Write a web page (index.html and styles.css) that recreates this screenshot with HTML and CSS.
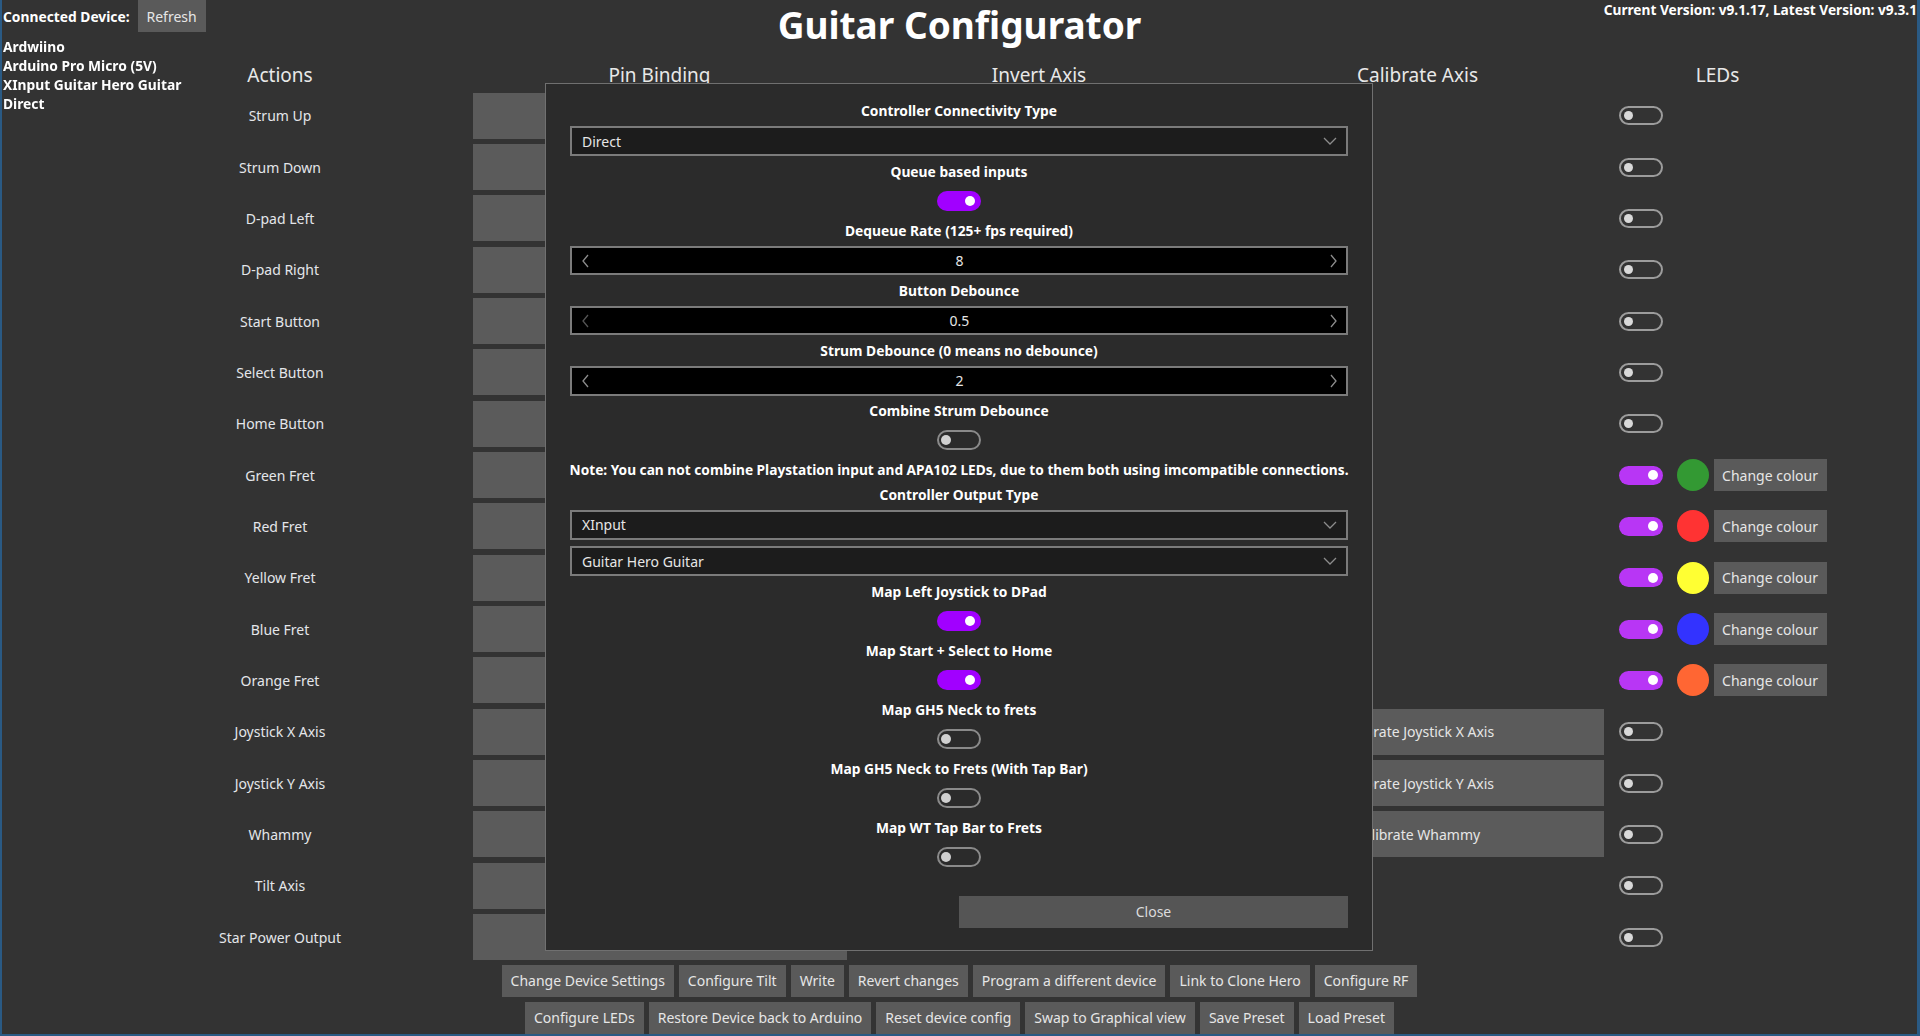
FILE: index.html
```html
<!DOCTYPE html>
<html lang="en">
<head>
<meta charset="utf-8">
<title>Guitar Configurator</title>
<link rel="stylesheet" href="styles.css">
</head>
<body>
<div class="app">
  <header class="topbar">
    <div class="device">
      <div class="device-head"><span class="strong">Connected Device:</span><button class="btn refresh">Refresh</button></div>
      <div class="device-info strong">Ardwiino<br>Arduino Pro Micro (5V)<br>XInput Guitar Hero Guitar<br>Direct</div>
    </div>
    <h1 class="title">Guitar Configurator</h1>
    <div class="version">Current Version: v9.1.17, Latest Version: v9.3.1</div>
  </header>

  <div class="table">
    <div class="th c1">Actions</div>
    <div class="th c2">Pin Binding</div>
    <div class="th c3">Invert Axis</div>
    <div class="th c4">Calibrate Axis</div>
    <div class="th c5">LEDs</div>

    <div class="label c1">Strum Up</div><div class="pin c2"></div>
    <div class="led c5"><span class="tog off"><span class="knob"></span></span></div>

    <div class="label c1">Strum Down</div><div class="pin c2"></div>
    <div class="led c5"><span class="tog off"><span class="knob"></span></span></div>

    <div class="label c1">D-pad Left</div><div class="pin c2"></div>
    <div class="led c5"><span class="tog off"><span class="knob"></span></span></div>

    <div class="label c1">D-pad Right</div><div class="pin c2"></div>
    <div class="led c5"><span class="tog off"><span class="knob"></span></span></div>

    <div class="label c1">Start Button</div><div class="pin c2"></div>
    <div class="led c5"><span class="tog off"><span class="knob"></span></span></div>

    <div class="label c1">Select Button</div><div class="pin c2"></div>
    <div class="led c5"><span class="tog off"><span class="knob"></span></span></div>

    <div class="label c1">Home Button</div><div class="pin c2"></div>
    <div class="led c5"><span class="tog off"><span class="knob"></span></span></div>

    <div class="label c1">Green Fret</div><div class="pin c2"></div>
    <div class="led c5"><span class="tog on"><span class="knob"></span></span><span class="dot green"></span><button class="btn colour">Change colour</button></div>

    <div class="label c1">Red Fret</div><div class="pin c2"></div>
    <div class="led c5"><span class="tog on"><span class="knob"></span></span><span class="dot red"></span><button class="btn colour">Change colour</button></div>

    <div class="label c1">Yellow Fret</div><div class="pin c2"></div>
    <div class="led c5"><span class="tog on"><span class="knob"></span></span><span class="dot yellow"></span><button class="btn colour">Change colour</button></div>

    <div class="label c1">Blue Fret</div><div class="pin c2"></div>
    <div class="led c5"><span class="tog on"><span class="knob"></span></span><span class="dot blue"></span><button class="btn colour">Change colour</button></div>

    <div class="label c1">Orange Fret</div><div class="pin c2"></div>
    <div class="led c5"><span class="tog on"><span class="knob"></span></span><span class="dot orange"></span><button class="btn colour">Change colour</button></div>

    <div class="label c1">Joystick X Axis</div><div class="pin c2"></div>
    <button class="calib c4">Calibrate Joystick X Axis</button>
    <div class="led c5"><span class="tog off"><span class="knob"></span></span></div>

    <div class="label c1">Joystick Y Axis</div><div class="pin c2"></div>
    <button class="calib c4">Calibrate Joystick Y Axis</button>
    <div class="led c5"><span class="tog off"><span class="knob"></span></span></div>

    <div class="label c1">Whammy</div><div class="pin c2"></div>
    <button class="calib c4">Calibrate Whammy</button>
    <div class="led c5"><span class="tog off"><span class="knob"></span></span></div>

    <div class="label c1">Tilt Axis</div><div class="pin c2"></div>
    <div class="led c5"><span class="tog off"><span class="knob"></span></span></div>

    <div class="label c1">Star Power Output</div><div class="pin c2"></div>
    <div class="led c5"><span class="tog off"><span class="knob"></span></span></div>
  </div>

  <div class="actions">
    <div class="btn-row">
      <button class="btn">Change Device Settings</button>
      <button class="btn">Configure Tilt</button>
      <button class="btn">Write</button>
      <button class="btn">Revert changes</button>
      <button class="btn">Program a different device</button>
      <button class="btn">Link to Clone Hero</button>
      <button class="btn">Configure RF</button>
    </div>
    <div class="btn-row">
      <button class="btn">Configure LEDs</button>
      <button class="btn">Restore Device back to Arduino</button>
      <button class="btn">Reset device config</button>
      <button class="btn">Swap to Graphical view</button>
      <button class="btn">Save Preset</button>
      <button class="btn">Load Preset</button>
    </div>
  </div>
</div>

<div class="modal">
  <div class="mlabel">Controller Connectivity Type</div>
  <div class="select"><span>Direct</span><svg class="chev" width="14" height="8" viewBox="0 0 14 8"><polyline points="1,1 7,7 13,1"/></svg></div>

  <div class="mlabel">Queue based inputs</div>
  <div class="mtog"><span class="mt on"><span class="knob"></span></span></div>

  <div class="mlabel">Dequeue Rate (125+ fps required)</div>
  <div class="spin"><svg class="arr" width="8" height="14" viewBox="0 0 8 14"><polyline points="6,1 1,7 6,13"/></svg><span>8</span><svg class="arr" width="8" height="14" viewBox="0 0 8 14"><polyline points="2,1 7,7 2,13"/></svg></div>

  <div class="mlabel">Button Debounce</div>
  <div class="spin"><svg class="arr dim" width="8" height="14" viewBox="0 0 8 14"><polyline points="6,1 1,7 6,13"/></svg><span>0.5</span><svg class="arr" width="8" height="14" viewBox="0 0 8 14"><polyline points="2,1 7,7 2,13"/></svg></div>

  <div class="mlabel">Strum Debounce (0 means no debounce)</div>
  <div class="spin"><svg class="arr" width="8" height="14" viewBox="0 0 8 14"><polyline points="6,1 1,7 6,13"/></svg><span>2</span><svg class="arr" width="8" height="14" viewBox="0 0 8 14"><polyline points="2,1 7,7 2,13"/></svg></div>

  <div class="mlabel">Combine Strum Debounce</div>
  <div class="mtog"><span class="mt off"><span class="knob"></span></span></div>

  <div class="mlabel note">Note: You can not combine Playstation input and APA102 LEDs, due to them both using imcompatible connections.</div>
  <div class="mlabel">Controller Output Type</div>
  <div class="select"><span>XInput</span><svg class="chev" width="14" height="8" viewBox="0 0 14 8"><polyline points="1,1 7,7 13,1"/></svg></div>
  <div class="select"><span>Guitar Hero Guitar</span><svg class="chev" width="14" height="8" viewBox="0 0 14 8"><polyline points="1,1 7,7 13,1"/></svg></div>

  <div class="mlabel">Map Left Joystick to DPad</div>
  <div class="mtog"><span class="mt on"><span class="knob"></span></span></div>

  <div class="mlabel">Map Start + Select to Home</div>
  <div class="mtog"><span class="mt on"><span class="knob"></span></span></div>

  <div class="mlabel">Map GH5 Neck to frets</div>
  <div class="mtog"><span class="mt off"><span class="knob"></span></span></div>

  <div class="mlabel">Map GH5 Neck to Frets (With Tap Bar)</div>
  <div class="mtog"><span class="mt off"><span class="knob"></span></span></div>

  <div class="mlabel">Map WT Tap Bar to Frets</div>
  <div class="mtog"><span class="mt off"><span class="knob"></span></span></div>

  <div class="mfooter"><button class="close">Close</button></div>
</div>
</body>
</html>
```

FILE: styles.css
```css
* { box-sizing: border-box; }

html, body {
  margin: 0;
  height: 100%;
}

body {
  background: #333333;
  font-family: "Noto Sans", "DejaVu Sans", sans-serif;
  font-size: 14px;
  color: #e4e6ea;
  overflow: hidden;
}

.app {
  height: 1036px;
  border-left: 2px solid #2a5a84;
  border-right: 3px solid #2a5a84;
  border-bottom: 2px solid #2a5a84;
  display: flex;
  flex-direction: column;
}

/* ---------- top bar ---------- */
.topbar {
  height: 60px;
  flex: none;
  display: grid;
  grid-template-columns: 1fr auto 1fr;
}

.device { padding-left: 1px; }

.device-head {
  display: flex;
  align-items: center;
  gap: 8px;
  height: 32px;
}

.strong {
  font-weight: 700;
  color: #ffffff;
  font-size: 13.8px;
}

.device-info {
  margin-top: 5px;
  line-height: 19px;
  position: relative;
  z-index: 1;
  white-space: nowrap;
}

.btn {
  background: #5a5a5a;
  color: #e6e6e6;
  border: 0;
  font-family: inherit;
  font-size: 14px;
  padding: 0 9px;
  height: 32px;
  white-space: nowrap;
}

.refresh { width: 68px; padding: 0; }

.title {
  margin: 0;
  font-size: 37px;
  font-weight: 700;
  line-height: 50px;
  color: #ffffff;
}

.version {
  justify-self: end;
  font-weight: 700;
  font-size: 13.7px;
  line-height: 20px;
  color: #ffffff;
  white-space: nowrap;
}

/* ---------- table ---------- */
.table {
  flex: none;
  display: grid;
  grid-template-columns: 385px 374px 385px 372px 228px;
  grid-template-rows: 30px;
  grid-auto-rows: 51.35px;
  justify-content: center;
  align-items: center;
}

.c1 { grid-column: 1; }
.c2 { grid-column: 2; }
.c3 { grid-column: 3; }
.c4 { grid-column: 4; }
.c5 { grid-column: 5; }

.th {
  text-align: center;
  font-size: 19px;
  line-height: 30px;
  color: #e8e8e8;
}

.label { text-align: center; }

.pin {
  height: 46px;
  background: #5b5b5b;
}

.calib {
  height: 46px;
  width: 100%;
  background: #5b5b5b;
  border: 0;
  color: #e6e6e6;
  font-family: inherit;
  font-size: 14px;
}

.led {
  display: flex;
  align-items: center;
  padding-left: 15px;
}

.tog {
  width: 44px;
  height: 19px;
  border-radius: 10px;
  display: flex;
  align-items: center;
  padding: 0 4px;
}

.tog .knob {
  width: 9px;
  height: 9px;
  border-radius: 50%;
}

.tog.off {
  border: 2px solid #9c9c9c;
  justify-content: flex-start;
  padding: 0 3px;
}

.tog.off .knob { background: #d9d9d9; }

.tog.on {
  background: #b836f5;
  justify-content: flex-end;
  padding: 0 5px;
}

.tog.on .knob { background: #ffffff; width: 10px; height: 10px; }

.dot {
  width: 32px;
  height: 32px;
  border-radius: 50%;
  margin-left: 14px;
  margin-right: 5px;
}

.green  { background: #339933; }
.red    { background: #ff3333; }
.yellow { background: #ffff33; }
.blue   { background: #3333ff; }
.orange { background: #ff6633; }

.colour { width: 113px; padding: 0; }

/* ---------- bottom buttons ---------- */
.actions {
  margin-top: 2px;
  display: flex;
  flex-direction: column;
  gap: 5px;
}

.btn-row {
  display: flex;
  justify-content: center;
  gap: 5px;
}

/* ---------- modal ---------- */
.modal {
  position: fixed;
  left: 545px;
  top: 83px;
  width: 828px;
  height: 868px;
  background: #2b2b2b;
  border: 1px solid #707070;
  padding: 17.2px 24px 0;
  display: flex;
  flex-direction: column;
  gap: 5.7px;
  text-align: center;
}

.mlabel {
  font-weight: 700;
  color: #ffffff;
  font-size: 13.8px;
  line-height: 19px;
  white-space: nowrap;
}

.mlabel.note {
  font-size: 13.7px;
  margin: 0 -10px;
}

.select {
  height: 30.5px;
  flex: none;
  border: 2px solid #7b7b7b;
  background: #1c1c1c;
  display: flex;
  align-items: center;
  justify-content: space-between;
  padding: 0 9px 0 10px;
  text-align: left;
  color: #e6e6e6;
}

.chev polyline, .arr polyline {
  fill: none;
  stroke: #8c8c8c;
  stroke-width: 1.3;
}

.arr.dim polyline { stroke: #555555; }

.spin {
  height: 29.7px;
  flex: none;
  border: 2px solid #7b7b7b;
  background: #000000;
  display: flex;
  align-items: center;
  justify-content: space-between;
  padding: 0 9px 0 10px;
  color: #e6e6e6;
}

.mtog {
  height: 28.6px;
  flex: none;
  display: flex;
  align-items: center;
  justify-content: center;
}

.mt {
  width: 44px;
  height: 20px;
  border-radius: 10px;
  display: flex;
  align-items: center;
}

.mt .knob {
  width: 10px;
  height: 10px;
  border-radius: 50%;
}

.mt.on {
  background: #a100ff;
  justify-content: flex-end;
  padding: 0 6px;
}

.mt.on .knob { background: #ffffff; }

.mt.off {
  border: 2px solid #8a8a8a;
  justify-content: flex-start;
  padding: 0 2px;
}

.mt.off .knob { background: #d0d0d0; }

.mfooter {
  margin-top: 18.8px;
  display: grid;
  grid-template-columns: 1fr 1fr;
}

.close {
  grid-column: 2;
  height: 32px;
  background: #555555;
  border: 0;
  color: #dcdcdc;
  font-family: inherit;
  font-size: 14px;
}
```
